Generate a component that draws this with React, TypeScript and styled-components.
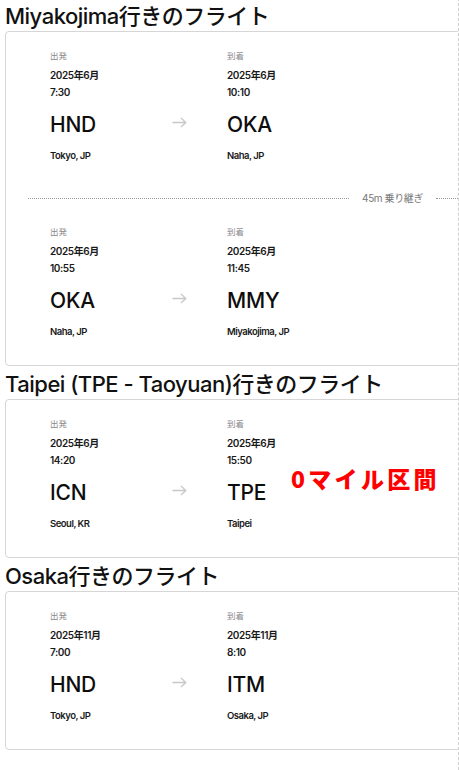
import React from "react";
import styled, { createGlobalStyle } from "styled-components";

const Global = createGlobalStyle`
  html, body { margin: 0; padding: 0; background: #fff; }
  body { font-family: Inter, "Noto Sans CJK JP", sans-serif; color: #111; }
`;

const Page = styled.div`
  width: 459px;
  margin-top: -2px;
  padding-left: 5px;
  box-sizing: border-box;
  border-right: 1px dashed #cfcfcf;
  overflow: hidden;
  min-height: 772px;
`;

const Heading = styled.h2`
  margin: 0;
  padding-top: 4px;
  font-family: Inter, "Noto Sans CJK JP", sans-serif;
  font-size: 22px;
  font-weight: 500;
  line-height: 29px;
  letter-spacing: -0.5px;
  white-space: nowrap;
  color: #111;
`;

const Card = styled.div`
  position: relative;
  width: 500px;
  box-sizing: border-box;
  border: 1px solid #d6d6d6;
  border-radius: 4px;
  padding: 17px 8px 26px 22px;
`;

const Segment = styled.div`
  display: flex;
  padding-left: 22px;
`;

const Endpoint = styled.div<{ $w: number }>`
  display: flex;
  flex-direction: column;
  width: ${(p) => p.$w}px;
  overflow: hidden;
`;

const Label = styled.div`
  font-family: "Noto Sans CJK JP", sans-serif;
  font-size: 8.5px;
  line-height: 12px;
  color: #8a8a8a;
`;

const DateText = styled.div`
  margin-top: 6px;
  font-size: 10px;
  font-weight: 600;
  line-height: 17px;
  letter-spacing: -0.4px;
  white-space: nowrap;
  color: #1a1a1a;
`;

const TimeText = styled.div`
  font-size: 10px;
  font-weight: 600;
  line-height: 17px;
  letter-spacing: -0.4px;
  color: #1a1a1a;
`;

const Code = styled.div`
  margin-top: 11px;
  font-size: 21px;
  font-weight: 500;
  line-height: 26px;
  letter-spacing: -0.2px;
  color: #0d0d0d;
`;

const City = styled.div`
  margin-top: 11px;
  font-size: 9.5px;
  font-weight: 600;
  line-height: 14px;
  letter-spacing: -0.5px;
  white-space: nowrap;
  color: #1a1a1a;
`;

const ArrowCol = styled.div`
  width: 55px;
  padding-top: 63px;
  color: #c8c8c8;
`;

const Divider = styled.div`
  display: flex;
  align-items: center;
  margin: 28px 0 20px;
  height: 14px;
`;

const DotLine = styled.div<{ $w?: number }>`
  ${(p) => (p.$w ? `width: ${p.$w}px;` : "flex: 1;")}
  border-top: 1px dotted #9a9a9a;
`;

const Layover = styled.div`
  margin: 0 13px 0 13px;
  font-family: Inter, "Noto Sans CJK JP", sans-serif;
  font-size: 10px;
  line-height: 14px;
  letter-spacing: -0.4px;
  color: #777;
  white-space: nowrap;
`;

const Annotation = styled.div`
  position: absolute;
  left: 285px;
  top: 64px;
  font-family: "Noto Sans CJK JP", sans-serif;
  font-size: 23px;
  font-weight: 900;
  line-height: 28px;
  letter-spacing: 3.3px;
  color: #ff0000;
  white-space: nowrap;
`;

const Arrow = () => (
  <svg width="15" height="11" viewBox="0 0 15 11" fill="none">
    <path d="M0.5 5.5H14M9 1L13.8 5.5L9 10" stroke="currentColor" strokeWidth="1.3" />
  </svg>
);

type Point = { date: string; time: string; code: string; city: string };

const Leg = ({ from, to }: { from: Point; to: Point }) => (
  <Segment>
    <Endpoint $w={122}>
      <Label>出発</Label>
      <DateText>{from.date}</DateText>
      <TimeText>{from.time}</TimeText>
      <Code>{from.code}</Code>
      <City>{from.city}</City>
    </Endpoint>
    <ArrowCol>
      <Arrow />
    </ArrowCol>
    <Endpoint $w={180}>
      <Label>到着</Label>
      <DateText>{to.date}</DateText>
      <TimeText>{to.time}</TimeText>
      <Code>{to.code}</Code>
      <City>{to.city}</City>
    </Endpoint>
  </Segment>
);

export default function App() {
  return (
    <>
      <Global />
      <Page>
        <Heading>Miyakojima行きのフライト</Heading>
        <Card>
          <Leg
            from={{ date: "2025年6月", time: "7:30", code: "HND", city: "Tokyo, JP" }}
            to={{ date: "2025年6月", time: "10:10", code: "OKA", city: "Naha, JP" }}
          />
          <Divider>
            <DotLine />
            <Layover>45m 乗り継ぎ</Layover>
            <DotLine $w={60} />
          </Divider>
          <Leg
            from={{ date: "2025年6月", time: "10:55", code: "OKA", city: "Naha, JP" }}
            to={{ date: "2025年6月", time: "11:45", code: "MMY", city: "Miyakojima, JP" }}
          />
        </Card>
        <Heading>Taipei (TPE - Taoyuan)行きのフライト</Heading>
        <Card>
          <Leg
            from={{ date: "2025年6月", time: "14:20", code: "ICN", city: "Seoul, KR" }}
            to={{ date: "2025年6月", time: "15:50", code: "TPE", city: "Taipei" }}
          />
          <Annotation>0マイル区間</Annotation>
        </Card>
        <Heading>Osaka行きのフライト</Heading>
        <Card>
          <Leg
            from={{ date: "2025年11月", time: "7:00", code: "HND", city: "Tokyo, JP" }}
            to={{ date: "2025年11月", time: "8:10", code: "ITM", city: "Osaka, JP" }}
          />
        </Card>
      </Page>
    </>
  );
}
